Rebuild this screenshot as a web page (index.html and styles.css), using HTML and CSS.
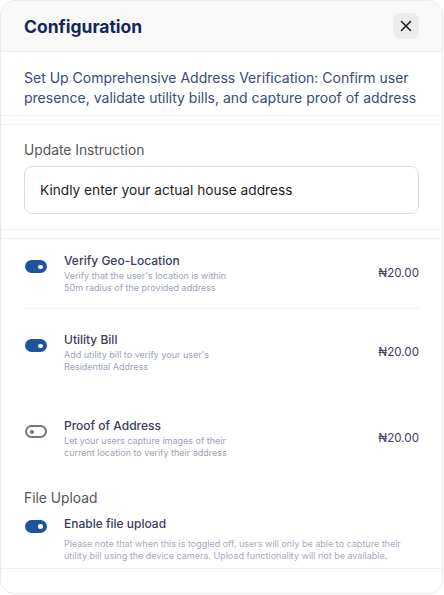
FILE: index.html
```html
<!DOCTYPE html>
<html lang="en">
<head>
<meta charset="UTF-8">
<meta name="viewport" content="width=device-width, initial-scale=1.0">
<title>Configuration</title>
<link rel="stylesheet" href="styles.css">
</head>
<body>
<div class="modal">
  <div class="modal-header">
    <h2 class="modal-title">Configuration</h2>
    <button class="close-button" aria-label="Close">
      <svg width="12" height="12" viewBox="0 0 12 12"><path d="M1.5 1.5l9 9M10.5 1.5l-9 9" stroke="#1f1f24" stroke-width="1.6" stroke-linecap="round"/></svg>
    </button>
  </div>

  <div class="section intro">
    <p>Set Up Comprehensive Address Verification: Confirm user presence, validate utility bills, and capture proof of address</p>
  </div>

  <div class="section instruction">
    <label class="field-label" for="instruction">Update Instruction</label>
    <input class="text-input" id="instruction" type="text" value="Kindly enter your actual house address">
  </div>

  <div class="section options">
    <div class="option first">
      <span class="switch on"></span>
      <div class="option-info">
        <div class="option-title">Verify Geo-Location</div>
        <div class="option-desc">Verify that the user's location is within 50m radius of the provided address</div>
      </div>
      <div class="price">&#8358;20.00</div>
    </div>

    <div class="option">
      <span class="switch on"></span>
      <div class="option-info">
        <div class="option-title">Utility Bill</div>
        <div class="option-desc">Add utility bill to verify your user's Residential Address</div>
      </div>
      <div class="price">&#8358;20.00</div>
    </div>

    <div class="option">
      <span class="switch"></span>
      <div class="option-info">
        <div class="option-title">Proof of Address</div>
        <div class="option-desc">Let your users capture images of their current location to verify their address</div>
      </div>
      <div class="price">&#8358;20.00</div>
    </div>

    <div class="upload">
      <div class="field-label">File Upload</div>
      <div class="upload-row">
        <span class="switch on"></span>
        <div class="option-info">
          <div class="upload-title">Enable file upload</div>
          <div class="upload-desc">Please note that when this is toggled off, users will only be able to capture their utility bill using the device camera. Upload functionality will not be available.</div>
        </div>
      </div>
    </div>
  </div>
</div>
</body>
</html>
```

FILE: styles.css
```css
body {
  margin: 0;
  padding: 0;
  font-family: 'Inter', 'Noto Sans', sans-serif;
  background-color: #ffffff;
}

.modal {
  box-sizing: border-box;
  width: 443px;
  height: 594px;
  border: 1px solid #ebebeb;
  border-radius: 14px;
  overflow: hidden;
  background: #ffffff;
}

/* Header */
.modal-header {
  height: 50px;
  padding: 0 23px;
  display: flex;
  align-items: center;
  justify-content: space-between;
  background: #f8f8f8;
  border-bottom: 1px solid #efefef;
}

.modal-title {
  margin: 0;
  font-size: 17.5px;
  font-weight: 700;
  color: #14265c;
}

.close-button {
  width: 26px;
  height: 26px;
  padding: 0;
  border: none;
  border-radius: 7px;
  background: #ececec;
  display: flex;
  align-items: center;
  justify-content: center;
  cursor: pointer;
}

/* Sections */
.section {
  padding: 0 23px;
  border-top: 1px solid #f1f1f1;
  border-bottom: 1px solid #f1f1f1;
  margin-bottom: 8px;
}

.intro {
  border-top: none;
  padding-top: 16px;
  padding-bottom: 7px;
}

.intro p {
  margin: 0;
  font-size: 14px;
  line-height: 20px;
  color: #3a4a7b;
}

.instruction {
  padding-top: 15px;
  padding-bottom: 15px;
}

.field-label {
  display: block;
  font-size: 13.8px;
  line-height: 20px;
  color: #555555;
}

.text-input {
  box-sizing: border-box;
  display: block;
  width: 100%;
  height: 48px;
  margin-top: 6px;
  padding: 0 15px;
  border: 1px solid #dcdcdc;
  border-radius: 8px;
  font-family: inherit;
  font-size: 13.7px;
  color: #1e1e1e;
  outline: none;
}

/* Options */
.options {
  padding-bottom: 6px;
}

.option {
  display: flex;
  align-items: center;
  padding: 22px 0;
}

.option.first {
  padding: 13px 0 14px;
  border-bottom: 1px solid #f1f1f1;
}

.switch {
  position: relative;
  box-sizing: border-box;
  flex: none;
  align-self: flex-start;
  width: 22px;
  height: 13px;
  margin: 8px 17px 0 1px;
  border: 2px solid #747483;
  border-radius: 7px;
  background: #ffffff;
}

.switch::after {
  content: '';
  position: absolute;
  top: 2.5px;
  left: 2.5px;
  width: 4.5px;
  height: 4.5px;
  border-radius: 50%;
  background: #747483;
}

.switch.on {
  border-color: #1c559d;
  background: #1c559d;
}

.switch.on::after {
  left: auto;
  right: 2.5px;
  background: #ffffff;
}

.option-info {
  flex: 1;
}

.option-title {
  font-size: 12px;
  line-height: 18px;
  font-weight: 500;
  color: #3c3b5a;
}

.option-desc {
  max-width: 172px;
  font-size: 9px;
  line-height: 12px;
  color: #9ca1bd;
}

.price {
  font-size: 11.6px;
  color: #3c3b5a;
}

/* File upload */
.upload {
  margin-top: 7px;
}

.upload-row {
  display: flex;
  margin-top: 7px;
}

.upload-row .switch {
  margin-top: 4.5px;
}

.upload-title {
  font-size: 12px;
  line-height: 18px;
  font-weight: 500;
  color: #3c3b5a;
}

.upload-desc {
  margin-top: 5px;
  font-size: 9px;
  line-height: 12px;
  color: #a7a9c2;
}
```
